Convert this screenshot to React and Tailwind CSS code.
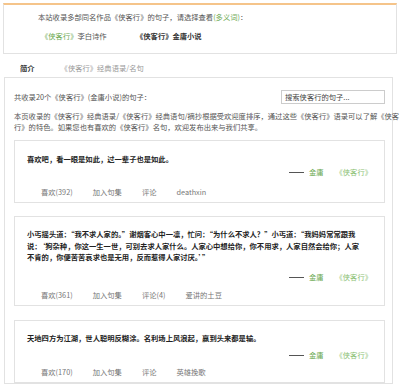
export default function App() {
  const font = { fontFamily: '"Noto Sans CJK SC", "Liberation Sans", sans-serif' };
  const Author = () => (
    <div className="flex items-center justify-end pr-[12px] leading-[11px]">
      <span className="w-[15px] h-[1px] bg-[#555] mr-[5px]"></span>
      <span className="text-[#6aa84f]">金庸</span>
      <span className="ml-[12px] text-[#8cbf73]">《侠客行》</span>
    </div>
  );
  const Actions = ({ items }) => (
    <div className="flex pl-[26px] text-[#777] leading-[11px]">
      {items.map((t, i) => (
        <span key={i} className="mr-[20px]">{t}</span>
      ))}
    </div>
  );
  return (
    <div className="w-[400px] h-[385px] overflow-hidden bg-white text-[7.3px] text-[#555]" style={font}>
      <div className="mx-[3px] mt-[3px] border-t-2 border-t-[#f5c48a] border-x border-b border-[#e2e2e2] pt-[7px] pb-[11px] pl-[34px] leading-[11px]">
        <div>
          本站收录多部同名作品《侠客行》的句子，请选择查看<span className="text-[#6aa84f]">(多义词)</span>：
        </div>
        <div className="flex mt-[8px]">
          <span className="w-[98px] pl-[3px]">
            <span className="text-[#6aa84f]">《侠客行》</span>李白诗作
          </span>
          <span className="font-bold text-[#333]">《侠客行》金庸小说</span>
        </div>
      </div>
      <div className="flex h-[23px] pt-[9px] pl-[20px] leading-[11px]">
        <span className="font-bold text-[#333]">简介</span>
        <span className="ml-[26px] text-[#999]">《侠客行》经典语录/名句</span>
      </div>
      <div className="ml-[4px] w-[389px] border border-[#e2e2e2] pl-[9px] pr-[7px] pt-[12px]">
        <div className="flex items-center justify-between h-[14px]">
          <span className="leading-[11px]">共收录20个《侠客行》(金庸小说)的句子：</span>
          <div className="w-[104px] h-[14px] border border-[#ccc] flex items-center pl-[3px] text-[#444] leading-[11px]">
            搜索侠客行的句子...
          </div>
        </div>
        <p className="mt-[7px] leading-[10.5px] whitespace-nowrap">
          本页收录的《侠客行》经典语录/《侠客行》经典语句/摘抄根据受欢迎度排序，通过这些《侠客行》语录可以了解《侠客
          <br />
          行》的特色。如果您也有喜欢的《侠客行》名句，欢迎发布出来与我们共享。
        </p>
        <div className="mt-[8px] border border-[#e2e2e2] pt-[13px] pb-[4px]">
          <p className="pl-[12px] font-bold text-[#222] leading-[11px]">喜欢吧，看一眼是如此，过一辈子也是如此。</p>
          <div className="mt-[2px]"><Author /></div>
          <div className="mt-[9px]"><Actions items={["喜欢(392)", "加入句集", "评论", "deathxin"]} /></div>
        </div>
        <div className="mt-[13px] border border-[#e2e2e2] pt-[12px] pb-[4px]">
          <p className="pl-[12px] pr-[6px] font-bold text-[#222] leading-[11.5px] whitespace-nowrap">
            小丐摇头道：“我不求人家的。”谢烟客心中一凛，忙问：“为什么不求人？”小丐道：“我妈妈常常跟我
            <br />
            说：‘狗杂种，你这一生一世，可别去求人家什么。人家心中想给你，你不用求，人家自然会给你；人家
            <br />
            不肯的，你便苦苦哀求也是无用，反而惹得人家讨厌。’”
          </p>
          <div className="mt-[8px]"><Author /></div>
          <div className="mt-[7px]"><Actions items={["喜欢(361)", "加入句集", "评论(4)", "爱讲的土豆"]} /></div>
        </div>
        <div className="mt-[14px] border border-[#e2e2e2] pt-[12px] pb-[4px]">
          <p className="pl-[12px] font-bold text-[#222] leading-[11px]">天地四方为江湖，世人聪明反糊涂。名利场上风浪起，赢到头来都是输。</p>
          <div className="mt-[6px]"><Author /></div>
          <div className="mt-[6px]"><Actions items={["喜欢(170)", "加入句集", "评论", "英雄挽歌"]} /></div>
        </div>
      </div>
    </div>
  );
}
